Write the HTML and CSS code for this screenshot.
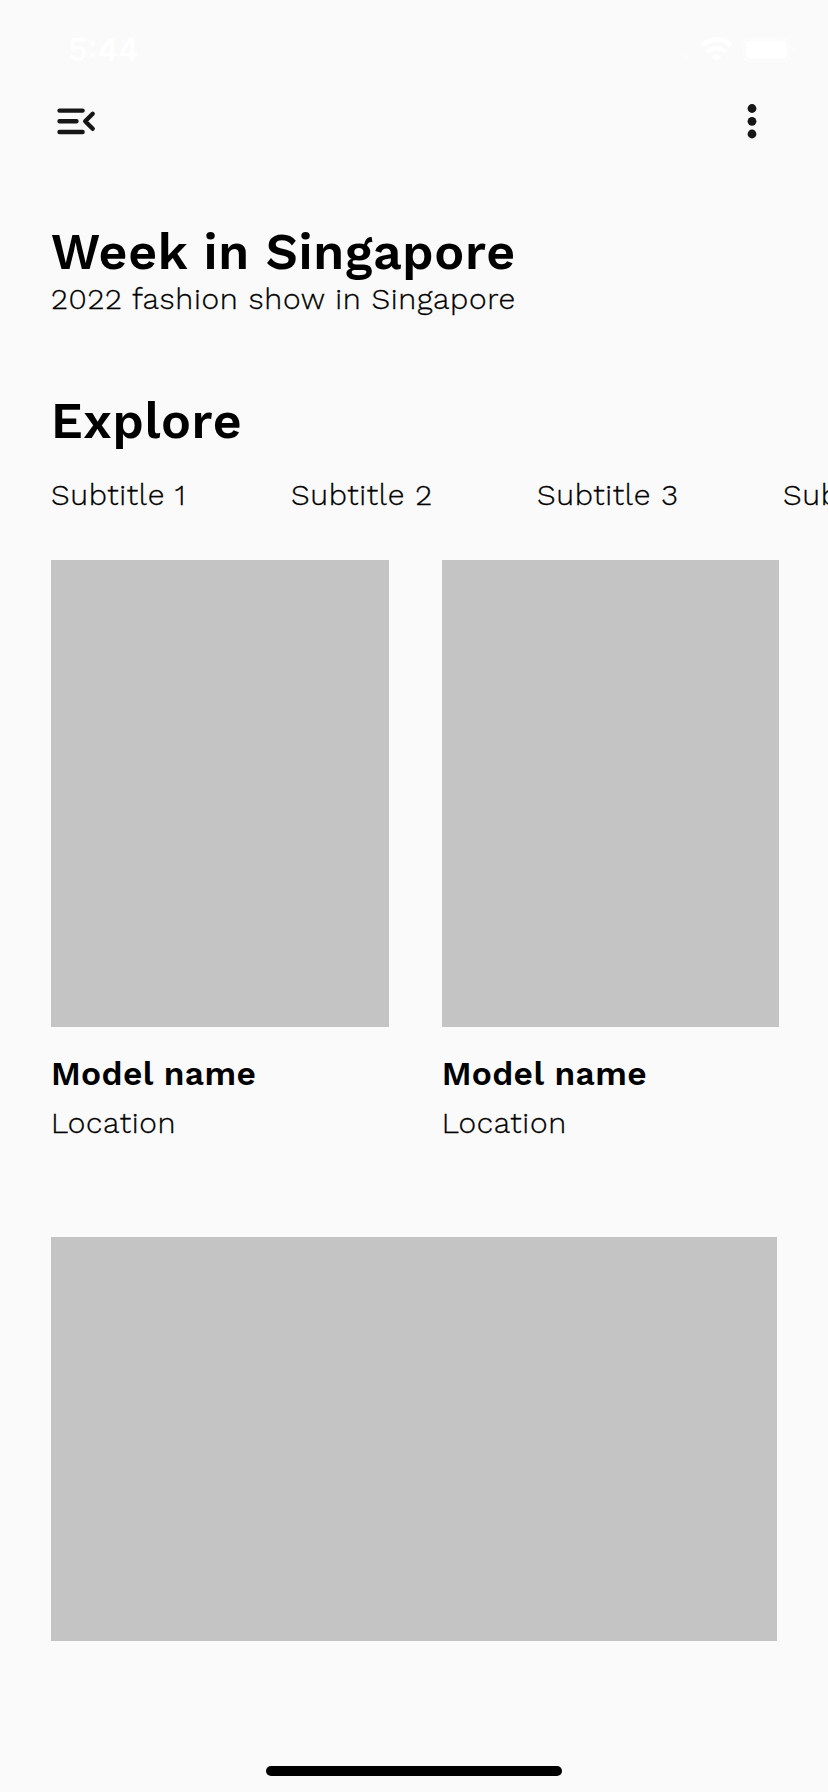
FILE: index.html
```html
<!DOCTYPE html>
<html lang="en">
<head>
<meta charset="utf-8">
<title>Week in Singapore</title>
<link rel="stylesheet" href="styles.css">
</head>
<body>
<div class="screen">
  <div class="status-bar">
    <span class="clock">5:44</span>
    <svg class="status-icons" width="114" height="28" viewBox="0 0 114 28" fill="#fff">
      <circle cx="5.500" cy="22" r="3.500" opacity=".25"/>
      <path d="M35.500 26.500 30.500 21.800a7.500 7.500 0 0 1 10 0z"/>
      <path d="M26 17.200a14 14 0 0 1 19 0" fill="none" stroke="#fff" stroke-width="4.400"/>
      <path d="M21 10.400a21 21 0 0 1 29 0" fill="none" stroke="#fff" stroke-width="4.800"/>
      <rect x="62.500" y="3.500" width="46" height="23" rx="6.500" fill="none" stroke="#fff" stroke-width="2" opacity=".4"/>
      <rect x="65" y="6" width="41" height="17.500" rx="4"/>
      <path d="M111.500 11c3 1.500 3 6.500 0 8z" opacity=".5"/>
    </svg>
  </div>
  <header class="toolbar">
    <svg class="menu-icon" width="42" height="32" viewBox="0 0 42 32" fill="none" stroke="#161616" stroke-width="4.400" stroke-linecap="round" stroke-linejoin="round">
      <path d="M4.500 5.600H27.600M4.500 16.300H21.500M4.500 27H27.600M37.700 8.800 30.200 16.300 37.700 23.800"/>
    </svg>
    <svg class="more-icon" width="12" height="36" viewBox="0 0 12 36" fill="#161616">
      <circle cx="6" cy="5.500" r="4.400"/><circle cx="6" cy="18.300" r="4.400"/><circle cx="6" cy="31" r="4.400"/>
    </svg>
  </header>
  <main class="content">
    <h1 class="title">Week in Singapore</h1>
    <p class="body-text tagline">2022 fashion show in Singapore</p>
    <h2 class="title explore">Explore</h2>
    <nav class="tabs">
      <span class="body-text">Subtitle 1</span>
      <span class="body-text">Subtitle 2</span>
      <span class="body-text">Subtitle 3</span>
      <span class="body-text">Subtitle 4</span>
    </nav>
    <section class="cards">
      <article class="card">
        <div class="photo"></div>
        <h3 class="name">Model name</h3>
        <p class="body-text location">Location</p>
      </article>
      <article class="card">
        <div class="photo"></div>
        <h3 class="name">Model name</h3>
        <p class="body-text location">Location</p>
      </article>
    </section>
    <div class="banner"></div>
  </main>
  <div class="home-indicator"></div>
</div>
</body>
</html>
```
FILE: styles.css
```css
* { box-sizing: border-box; margin: 0; padding: 0; }
body {
  background: #fafafa;
  color: #000;
  font-family: "Work Sans", Inter, sans-serif;
}
svg { display: block; }
.screen {
  width: 828px;
  height: 1792px;
  overflow: hidden;
  display: flex;
  flex-direction: column;
  background: #fafafa;
}
.status-bar {
  height: 88px;
  padding: 35px 33px 0 68px;
  display: flex;
  justify-content: space-between;
}
.clock {
  font-family: Inter, sans-serif;
  font-size: 31px;
  font-weight: 600;
  line-height: 30px;
  color: #fff;
}
.toolbar {
  height: 66px;
  padding: 0 70.5px 0 55px;
  display: flex;
  justify-content: space-between;
  align-items: center;
}
.content { padding: 70px 0 0 51px; }
.title {
  font-size: 50px;
  font-weight: 600;
  line-height: 56px;
  letter-spacing: .65px;
  white-space: nowrap;
}
.body-text {
  font-size: 30px;
  font-weight: 300;
  line-height: 32px;
  letter-spacing: .7px;
  -webkit-text-stroke: .3px #000;
  white-space: nowrap;
}
.tagline { margin-top: 3px; }
.explore { margin-top: 78px; }
.tabs {
  display: grid;
  grid-template-columns: 240px 246px 246px 150px;
  margin-top: 30px;
}
.cards {
  display: flex;
  gap: 53.2px;
  margin-top: 49px;
}
.card { width: 337.5px; }
.photo { height: 467px; background: #c4c4c4; }
.name {
  margin-top: 29px;
  font-size: 33.5px;
  font-weight: 600;
  line-height: 36px;
  letter-spacing: .4px;
}
.location { margin-top: 15px; }
.banner {
  width: 726px;
  height: 403.5px;
  margin-top: 98px;
  background: #c4c4c4;
}
.home-indicator {
  width: 296px;
  height: 10px;
  margin: auto auto 16px;
  border-radius: 5px;
  background: #000;
}
```
